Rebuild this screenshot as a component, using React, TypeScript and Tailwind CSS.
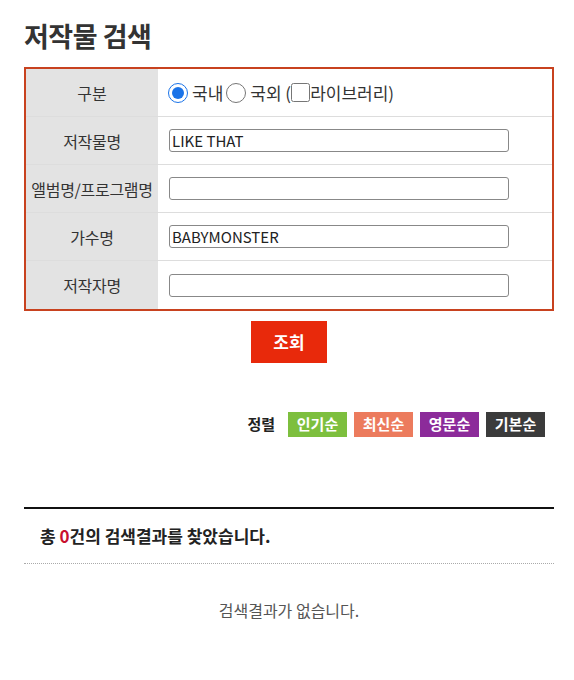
import React from 'react';

const rows = [
  { label: '저작물명', value: 'LIKE THAT' },
  { label: '앨범명/프로그램명', value: '' },
  { label: '가수명', value: 'BABYMONSTER' },
  { label: '저작자명', value: '' },
];

const sorts = [
  { label: '인기순', cls: 'bg-[#7dbf3e]' },
  { label: '최신순', cls: 'bg-[#ec7b5d]' },
  { label: '영문순', cls: 'bg-[#8c2b9a]' },
  { label: '기본순', cls: 'bg-[#3b3b3b]' },
];

export default function App() {
  return (
    <div className="min-h-screen bg-white pl-6 pr-[20px] pt-[18px] text-[#333] [font-family:'Noto_Sans_CJK_KR','Noto_Sans',sans-serif]">
      <h1 className="text-[27px] font-bold leading-[36px] tracking-[-0.5px] text-[#333]">저작물 검색</h1>

      <div className="mt-[13px] border-2 border-[#c8421f]">
        <div className="flex h-[48px] border-b border-[#ddd]">
          <div className="flex w-[132px] items-center justify-center bg-[#e3e3e3] text-[16px]">구분</div>
          <div className="flex flex-1 items-center pl-[10px] text-[17px]">
            <input type="radio" name="kind" defaultChecked className="m-0 h-[20px] w-[20px] accent-[#1a73e8]" />
            <span className="ml-[4px]">국내</span>
            <input type="radio" name="kind" className="ml-[3px] h-[20px] w-[20px]" />
            <span className="ml-[4px]">국외 (</span>
            <input type="checkbox" className="h-[19px] w-[19px]" />
            <span>라이브러리)</span>
          </div>
        </div>
        {rows.map((r, i) => (
          <div key={r.label} className={`flex h-[48px] ${i < rows.length - 1 ? 'border-b border-[#ddd]' : ''}`}>
            <div className="flex w-[132px] items-center justify-center whitespace-nowrap bg-[#e3e3e3] text-[16px] tracking-[-0.3px]">
              {r.label}
            </div>
            <div className="flex flex-1 items-center pl-[11px]">
              <input
                type="text"
                defaultValue={r.value}
                className="h-[23px] w-[340px] rounded-[3px] border border-[#888] px-[2px] text-[15px] text-[#222] outline-none"
              />
            </div>
          </div>
        ))}
      </div>

      <div className="mt-[10px] flex justify-center">
        <button className="h-[42px] w-[76px] bg-[#e8290b] text-[17px] font-bold text-white">조회</button>
      </div>

      <div className="mt-[49px] flex items-center justify-end gap-[7px] pr-[9px]">
        <span className="mr-[6px] text-[15px] font-bold text-[#222]">정렬</span>
        {sorts.map((s) => (
          <span key={s.label} className={`flex h-[25px] w-[59px] items-center justify-center text-[15px] font-bold text-white ${s.cls}`}>
            {s.label}
          </span>
        ))}
      </div>

      <div className="mt-[70px] border-t-2 border-[#111]" />
      <div className="flex h-[54px] items-center pl-[16px] text-[17px] font-bold text-[#222]">
        총&nbsp;<span className="text-[#c8102e]">0</span>건의 검색결과를 찾았습니다.
      </div>
      <div className="border-t border-dotted border-[#aaa]" />
      <div className="mt-[34px] text-center text-[16px] text-[#555]">검색결과가 없습니다.</div>
    </div>
  );
}
